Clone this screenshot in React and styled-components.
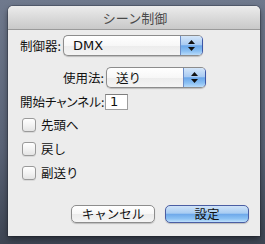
import React from "react";
import styled, { createGlobalStyle } from "styled-components";

const Global = createGlobalStyle`
  html, body { margin: 0; padding: 0; }
  body {
    width: 265px; height: 244px; overflow: hidden;
    background: linear-gradient(to bottom, #6f798d 0%, #5a6376 60%, #3e4553 100%);
    font-family: "DejaVu Sans", "Noto Sans CJK JP", sans-serif;
    font-size: 13px; color: #111;
  }
`;

const Window = styled.div`
  margin: 6px 0 0 8px;
  width: 252px;
  height: 230px;
  display: flex;
  flex-direction: column;
  border-radius: 5px 5px 0 0;
  background: #ececec;
  box-shadow: 0 3px 6px rgba(0,0,0,0.45), 0 0 0 1px rgba(40,45,60,0.35);
  overflow: hidden;
`;

const TitleBar = styled.div`
  height: 23px;
  flex: none;
  display: flex;
  align-items: center;
  justify-content: center;
  background: linear-gradient(to bottom, #ececec 0%, #dcdcdc 45%, #c9c9c9 100%);
  border-bottom: 1px solid #9a9a9a;
  color: #4a4a4a;
  font-family: "Noto Sans CJK JP", sans-serif;
  font-size: 13px;
  line-height: 1;
  padding-left: 2px;
`;

const Content = styled.div`
  flex: 1;
  display: flex;
  flex-direction: column;
  padding: 5px 0 0 12px;
`;

const Row = styled.div`
  display: flex;
  align-items: center;
  gap: ${p => p.$gap || 2}px;
  margin-top: ${p => p.$mt || 0}px;
`;

const Label = styled.span`
  font-family: "Noto Sans CJK JP", sans-serif;
  font-size: 12.5px;
  line-height: 16px;
  white-space: nowrap;
  width: ${p => (p.$w ? p.$w + "px" : "auto")};
  text-align: ${p => (p.$right ? "right" : "left")};
  font-feature-settings: ${p => (p.$palt ? '"palt"' : "normal")};
  color: #111;
`;

const Popup = styled.div`
  width: ${p => p.$w}px;
  height: 21px;
  box-sizing: border-box;
  display: flex;
  border: 1px solid #8c8c8c;
  border-right-color: #3c56a6;
  border-radius: 5px;
  overflow: hidden;
  background: linear-gradient(to bottom, #ffffff 0%, #f7f7f7 50%, #ececec 51%, #f4f4f4 100%);
  box-shadow: 0 1px 1px rgba(0,0,0,0.2);
`;

const PopupText = styled.span`
  flex: 1;
  padding-left: 9px;
  font-size: ${p => (p.$cjk ? "12.5px" : "13px")};
  line-height: 19px;
  font-family: ${p => (p.$cjk ? '"Noto Sans CJK JP", sans-serif' : '"DejaVu Sans", sans-serif')};
`;

const PopupArrows = styled.div`
  width: 21px;
  flex: none;
  display: flex;
  align-items: center;
  justify-content: center;
  border-left: 1px solid #6b8cc7;
  background: linear-gradient(to bottom, #d4e6f9 0%, #a9cbf2 45%, #6aa7ea 52%, #8cc1f3 80%, #b8dbfa 100%);
`;

const TextField = styled.div`
  width: 23px;
  height: 16px;
  box-sizing: border-box;
  border: 1px solid #9d9d9d;
  border-top-color: #7d7d7d;
  background: #fff;
  padding-left: 4px;
  font-size: 13px;
  line-height: 14px;
  font-family: "DejaVu Sans", sans-serif;
`;

const CheckRow = styled.label`
  display: flex;
  align-items: center;
  gap: 5px;
  margin-left: 2px;
  margin-top: ${p => p.$mt}px;
  height: 14px;
`;

const Box = styled.span`
  width: 14px;
  height: 14px;
  box-sizing: border-box;
  border: 1px solid #9a9a9a;
  border-radius: 3px;
  background: linear-gradient(to bottom, #ffffff 0%, #f3f3f3 50%, #e4e4e4 100%);
  box-shadow: 0 1px 0 rgba(0,0,0,0.08);
`;

const Buttons = styled.div`
  display: flex;
  gap: 10px;
  margin-top: 25px;
  margin-left: 51px;
`;

const Button = styled.div`
  width: 84px;
  height: 18px;
  box-sizing: border-box;
  border-radius: 5px;
  display: flex;
  align-items: center;
  justify-content: center;
  font-family: "Noto Sans CJK JP", sans-serif;
  font-size: 12.5px;
  line-height: 1;
  color: #111;
  border: 1px solid ${p => (p.$primary ? "#4b5ea3" : "#8d8d8d")};
  background: ${p =>
    p.$primary
      ? "linear-gradient(to bottom, #cfe3f8 0%, #a8ccf2 45%, #6ea9ea 52%, #8cc2f4 80%, #bfe0fb 100%)"
      : "linear-gradient(to bottom, #ffffff 0%, #f7f7f7 50%, #ebebeb 51%, #f5f5f5 100%)"};
  box-shadow: 0 1px 1px rgba(0,0,0,0.2);
`;

const Arrows = () => (
  <svg width="9" height="13" viewBox="0 0 9 13">
    <path d="M4.5 1 L8 5 L1 5 Z" fill="#111" />
    <path d="M4.5 12 L8 8 L1 8 Z" fill="#111" />
  </svg>
);

export default function App() {
  return (
    <>
      <Global />
      <Window>
        <TitleBar>シーン制御</TitleBar>
        <Content>
          <Row>
            <Label>制御器:</Label>
            <Popup $w={140}>
              <PopupText>DMX</PopupText>
              <PopupArrows><Arrows /></PopupArrows>
            </Popup>
          </Row>
          <Row $mt={11}>
            <Label $w={84} $right>使用法:</Label>
            <Popup $w={100}>
              <PopupText $cjk>送り</PopupText>
              <PopupArrows><Arrows /></PopupArrows>
            </Popup>
          </Row>
          <Row $mt={6} $gap={1}>
            <Label $w={84} $palt>開始チャンネル:</Label>
            <TextField>1</TextField>
          </Row>
          <CheckRow $mt={8}><Box /><Label>先頭へ</Label></CheckRow>
          <CheckRow $mt={10}><Box /><Label>戻し</Label></CheckRow>
          <CheckRow $mt={10}><Box /><Label>副送り</Label></CheckRow>
          <Buttons>
            <Button>キャンセル</Button>
            <Button $primary>設定</Button>
          </Buttons>
        </Content>
      </Window>
    </>
  );
}
